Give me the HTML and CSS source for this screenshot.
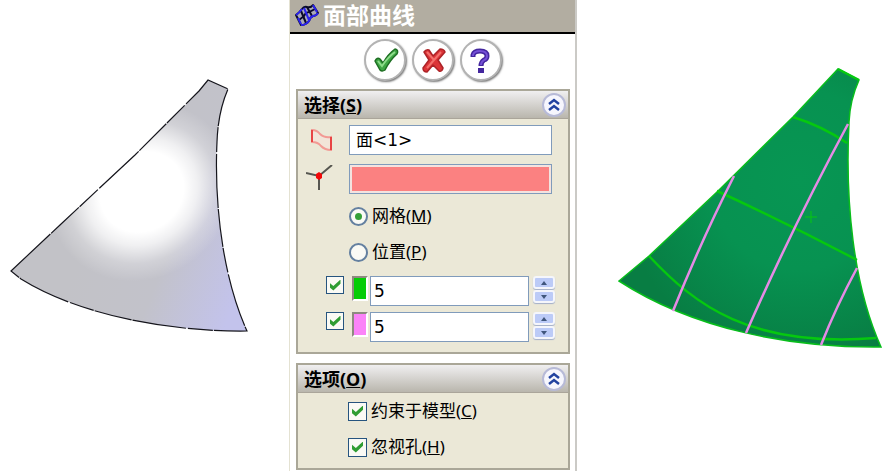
FILE: index.html
```html
<!DOCTYPE html>
<html lang="zh-CN">
<head>
<meta charset="UTF-8">
<meta name="viewport" content="width=device-width, initial-scale=1.0">
<title>面部曲线</title>
<link rel="stylesheet" href="styles.css">
</head>
<body>

<main class="workspace">
    <!-- shaded face -->
    <div class="view">
        <svg class="model" viewBox="0 0 289 471" role="img">
            <defs>
                <linearGradient id="steel" gradientUnits="userSpaceOnUse" x1="90" y1="230" x2="240" y2="290">
                    <stop offset="0" stop-color="#c2c2c7"/>
                    <stop offset="0.5" stop-color="#c2c2ca"/>
                    <stop offset="1" stop-color="#c3c3ec"/>
                </linearGradient>
                <radialGradient id="shine" gradientUnits="userSpaceOnUse" cx="0" cy="0" r="1" gradientTransform="translate(142 192) rotate(-35) scale(96 86)">
                    <stop offset="0" stop-color="#fff"/>
                    <stop offset="0.45" stop-color="#fff"/>
                    <stop offset="0.6" stop-color="#fff" stop-opacity="0.75"/>
                    <stop offset="0.8" stop-color="#fff" stop-opacity="0.25"/>
                    <stop offset="1" stop-color="#fff" stop-opacity="0"/>
                </radialGradient>
                <path id="face" d="M11 271 L60 225 L135 155 L199 91 L208 80 L228 89 Q218 112 217 142 C214 205 223 278 247 331 C169 332 79 315 21 279 Z"/>
            </defs>
            <use href="#face" fill="url(#steel)"/>
            <use href="#face" fill="url(#shine)"/>
            <use href="#face" fill="none" stroke="#15151c" stroke-width="1.2" stroke-dasharray="54 1 38 1 25 2"/>
        </svg>
    </div>

    <form class="panel">
        <h1 class="panel-title">
            <svg class="title-icon" viewBox="0 0 26 24" fill="none">
                <path d="M2 12 Q5 10 8 6 Q10 3 13 4 Q17 5 19 2 L24 10 Q22 13 19 13 Q16 14 15 18 Q12 22 7 22 Z" fill="#a9a9b8" stroke="#0a0a2a" stroke-width="2" stroke-linejoin="round"/>
                <path d="M5 17 Q10 14 12 10 Q16 9 21 6" stroke="#0a0a2a" stroke-width="2"/>
                <path d="M7 8 L12 20 M13 4 L18 13" stroke="#0a0a2a" stroke-width="2"/>
                <path d="M7 22 Q12 22 15 18 Q16 14 19 13 Q22 13 24 10 M2 12 Q5 10 8 6 M10 5 L15 17 M4 15 L7 21 M19 2 L23 9" stroke="#2a22ee" stroke-width="2"/>
            </svg>
            <span>面部曲线</span>
        </h1>

        <div class="actions">
            <button type="button" class="round-button" aria-label="确定">
                <svg viewBox="2 2 38 38"><path d="M11 22 Q13 18 16 20 L19 24 Q24 15 31 10 Q35 11 33 15 Q26 21 21 31 Q18 33 16 31 Z" fill="#3fa644" stroke="#1d6e22" stroke-width="1.5" stroke-linejoin="round"/><path d="M14 22 L18 27 Q24 18 31 13" fill="none" stroke="#8ddb8a" stroke-width="2"/></svg>
            </button>
            <button type="button" class="round-button" aria-label="取消">
                <svg viewBox="2 2 38 38"><path d="M12 13 Q14 10 17 11 L21 17 L28 10 Q32 10 33 13 L26 21 L31 29 Q30 33 27 32 L21 26 L15 33 Q11 33 11 29 L17 21 Z" fill="#dc3437" stroke="#ad2327" stroke-width="1.5" stroke-linejoin="round"/><path d="M15 13 L22 21 M29 13 L15 29" stroke="#f4706c" stroke-width="2"/></svg>
            </button>
            <button type="button" class="round-button" aria-label="帮助">
                <svg viewBox="2 2 38 38"><path d="M13 18 V16 Q14 12 20 12 Q27 12 27 17 Q27 20 24 21 Q21 23 21 27" fill="none" stroke="#43269e" stroke-width="5"/><path d="M13 17 V16 Q14 12 20 12 Q27 12 27 17 Q27 20 24 21 Q21 23 21 26" fill="none" stroke="#7550d6" stroke-width="2"/><path d="M18 29 H24 V34 H18 Z" fill="#43269e"/></svg>
            </button>
        </div>

        <section class="group">
            <header class="group-header">
                <h2>选择(<u>S</u>)</h2>
                <button type="button" class="collapse" aria-label="折叠选择">
                    <svg viewBox="2 2 20 20"><path d="M7 11 L12 7 L17 11 M7 17 L12 13 L17 17"/></svg>
                </button>
            </header>
            <div class="group-body">
                <div class="pick-row">
                    <label for="faceInput">
                        <svg class="pick-icon" viewBox="0 0 28 28" aria-label="面"><path d="M6 4 Q11 4 14 8 Q18 12 25 11 V24 Q19 24 15 20 Q12 16 6 16 Z" fill="#f2e4d8" stroke="#f29a94" stroke-width="2"/><path d="M6 4 V16 M25 11 V24" stroke="#e84444" stroke-width="2"/></svg>
                    </label>
                    <input type="text" id="faceInput" class="text-box" value="面&lt;1&gt;">
                </div>
                <div class="pick-row">
                    <label for="vertexInput">
                        <svg class="pick-icon" viewBox="0 0 28 28" aria-label="顶点"><path d="M0 8 L13 11 L26 0 M13 11 V25" fill="none" stroke="#565650" stroke-width="2"/><path d="M10 9 L13 7 L16 9 V13 L13 15 L10 13 Z" fill="#f30808"/></svg>
                    </label>
                    <input type="text" id="vertexInput" class="text-box active">
                </div>
                <div class="choice-row">
                    <input type="radio" name="mode" id="mesh" checked>
                    <label for="mesh">网格(<u>M</u>)</label>
                </div>
                <div class="choice-row">
                    <input type="radio" name="mode" id="position">
                    <label for="position">位置(<u>P</u>)</label>
                </div>
                <div class="count-row">
                    <input type="checkbox" aria-label="方向 1" checked>
                    <span class="swatch green"></span>
                    <input type="text" class="text-box" aria-label="方向 1 曲线数" value="5">
                    <span class="spinner">
                        <button type="button" aria-label="增加"><svg viewBox="0 0 6 4"><path d="M0 4 L3 0 L6 4 Z"/></svg></button>
                        <button type="button" aria-label="减少"><svg viewBox="0 0 6 4"><path d="M0 0 L3 4 L6 0 Z"/></svg></button>
                    </span>
                </div>
                <div class="count-row">
                    <input type="checkbox" aria-label="方向 2" checked>
                    <span class="swatch pink"></span>
                    <input type="text" class="text-box" aria-label="方向 2 曲线数" value="5">
                    <span class="spinner">
                        <button type="button" aria-label="增加"><svg viewBox="0 0 6 4"><path d="M0 4 L3 0 L6 4 Z"/></svg></button>
                        <button type="button" aria-label="减少"><svg viewBox="0 0 6 4"><path d="M0 0 L3 4 L6 0 Z"/></svg></button>
                    </span>
                </div>
            </div>
        </section>

        <section class="group">
            <header class="group-header">
                <h2>选项(<u>O</u>)</h2>
                <button type="button" class="collapse" aria-label="折叠选项">
                    <svg viewBox="2 2 20 20"><path d="M7 11 L12 7 L17 11 M7 17 L12 13 L17 17"/></svg>
                </button>
            </header>
            <div class="group-body options">
                <div class="choice-row">
                    <input type="checkbox" id="constrain" checked>
                    <label for="constrain">约束于模型(<u>C</u>)</label>
                </div>
                <div class="choice-row">
                    <input type="checkbox" id="holes" checked>
                    <label for="holes">忽视孔(<u>H</u>)</label>
                </div>
            </div>
        </section>
    </form>

    <!-- face with the preview curves -->
    <div class="view">
        <svg class="model" viewBox="577 0 311 471" role="img">
            <defs>
                <radialGradient id="green" gradientUnits="userSpaceOnUse" cx="800" cy="180" r="180">
                    <stop offset="0" stop-color="#079653"/>
                    <stop offset="0.5" stop-color="#079251"/>
                    <stop offset="1" stop-color="#087d43"/>
                </radialGradient>
            </defs>
            <path d="M619 281 L649 256 L717 192 L793 117 L838 69 L859 80 Q850 100 849 122 C845 200 853 285 881 347 C790 348 693 329 619 281 Z" fill="url(#green)" stroke="#08bd1c" stroke-width="1.5"/>
            <g fill="none" stroke="#06c810" stroke-width="2.5">
                <path d="M838 69 L859 80"/>
                <path d="M793 117 Q822 126 847 143"/>
                <path d="M717 191 Q785 222 857 260"/>
                <path d="M649 256 C695 305 750 348 876 338"/>
                <path d="M805 217 H817 M811 211 V223" stroke-width="1"/>
            </g>
            <g fill="none" stroke="#e58be5" stroke-width="2.5">
                <path d="M734 176 Q702 239 673 311"/>
                <path d="M848 124 Q792 228 746 333"/>
                <path d="M857 268 Q836 307 821 345"/>
            </g>
        </svg>
    </div>
</main>

</body>
</html>
```
FILE: styles.css
```css
* {
    box-sizing: border-box;
}
body {
    margin: 0;
    background-color: #fff;
    color: #000;
    font-family: "Noto Sans", "Noto Sans CJK SC", sans-serif;
    font-size: 17px;
}
.workspace {
    display: grid;
    grid-template-columns: 289fr 288px 311fr;
    align-items: start;
}
.model {
    display: block;
    width: 100%;
}

/* Property panel */
.panel {
    border-left: 1px solid #e4e2d2;
    border-right: 2px solid #cbcac6;
    padding-bottom: 2px;
}
.panel-title {
    display: flex;
    align-items: center;
    gap: 3px;
    height: 34px;
    margin: 0;
    padding: 0 4px 2px;
    background-color: #b2ada1;
    border-bottom: 2px solid #000;
    color: #fff;
    font-size: 23px;
    line-height: 28px;
}
.title-icon {
    width: 26px;
    height: 24px;
}
.actions {
    display: flex;
    justify-content: center;
    gap: 6px;
    padding: 5px 0 8px;
}
.round-button {
    width: 42px;
    height: 42px;
    padding: 0;
    border: 2px solid #b3b3b3;
    border-radius: 50%;
    background-color: #fff;
    box-shadow: 1px 1px 2px #777;
}
.round-button svg {
    display: block;
    width: 38px;
    height: 38px;
}

/* Groups */
.group {
    margin: 0 5px 9px 6px;
    border: 2px solid #aaa798;
    background-color: #ebe8d7;
}
.group:last-child {
    margin-bottom: 0;
}
.group-header {
    display: flex;
    align-items: center;
    justify-content: space-between;
    height: 28px;
    padding: 0 2px 0 6px;
    background: linear-gradient(#f0eff0, #b9b6ad);
    border-bottom: 1px solid #aaa59a;
}
.group-header h2 {
    margin: 0;
    font-size: 18px;
    line-height: 26px;
}
.collapse {
    width: 24px;
    height: 24px;
    padding: 0;
    border: 2px solid #b7bad7;
    border-radius: 50%;
    background-color: #f6f6fd;
}
.collapse svg {
    display: block;
    width: 20px;
    height: 20px;
    fill: none;
    stroke: #2142a0;
    stroke-width: 2.5;
}
.group-body {
    padding: 6px 13px 10px 8px;
}

/* Controls */
.text-box {
    flex: 1;
    min-width: 0;
    height: 30px;
    padding: 0 3px;
    border: 1px solid #809bbb;
    background-color: #fff;
    color: #000;
    font-family: "DejaVu Sans", "Noto Sans CJK SC", sans-serif;
    font-size: 17px;
}
.text-box.active {
    background-color: #fb8181;
    box-shadow: inset 0 0 0 2px #f3e3df;
}
.pick-row {
    display: flex;
    align-items: center;
    gap: 15px;
    margin-bottom: 9px;
    padding-right: 3px;
}
.pick-row .text-box {
    padding: 0 6px 3px;
}
.pick-row + .choice-row {
    margin-top: -5px;
}
.pick-icon {
    display: block;
    width: 28px;
    height: 28px;
}
.choice-row {
    display: flex;
    align-items: center;
    gap: 4px;
    height: 36px;
    padding-left: 43px;
    line-height: 24px;
}
input[type="radio"],
input[type="checkbox"] {
    appearance: none;
    flex: none;
    display: grid;
    place-items: center;
    width: 19px;
    height: 19px;
    margin: 0;
    border: 1px solid #26547f;
    background-color: #fafaf5;
}
input[type="radio"] {
    border: 2px solid #6480a0;
    border-radius: 50%;
}
input[type="radio"]:checked::before {
    content: "";
    width: 7px;
    height: 7px;
    border-radius: 50%;
    background-color: #34a037;
}
input[type="checkbox"]:checked::before {
    content: "";
    width: 11px;
    height: 11px;
    background-color: #2f9d32;
    clip-path: polygon(0 30%, 35% 58%, 100% 0, 100% 38%, 35% 100%, 0 70%);
}
.count-row {
    display: flex;
    align-items: flex-start;
    gap: 2px;
    margin-top: 6px;
    padding-left: 20px;
}
.count-row input[type="checkbox"] {
    width: 18px;
    height: 18px;
    margin-right: 6px;
}
.swatch {
    width: 16px;
    height: 25px;
    border: 2px solid;
    border-color: #8e8a80 #fff #fff #8e8a80;
}
.green {
    background-color: #06cd06;
}
.pink {
    background-color: #fb83f8;
}
.spinner {
    display: grid;
    gap: 1px;
    margin-left: 2px;
}
.spinner button {
    display: grid;
    place-items: center;
    width: 22px;
    height: 13px;
    padding: 0;
    border: 2px solid #f5f6fb;
    border-radius: 3px;
    background-color: #bccbf7;
    box-shadow: 0 1px 1px #a3afc9;
}
.spinner svg {
    display: block;
    width: 6px;
    height: 4px;
    fill: #40567c;
}
.group-body.options {
    padding-top: 0;
    padding-bottom: 3px;
}
.options .choice-row {
    padding-left: 42px;
}
```
